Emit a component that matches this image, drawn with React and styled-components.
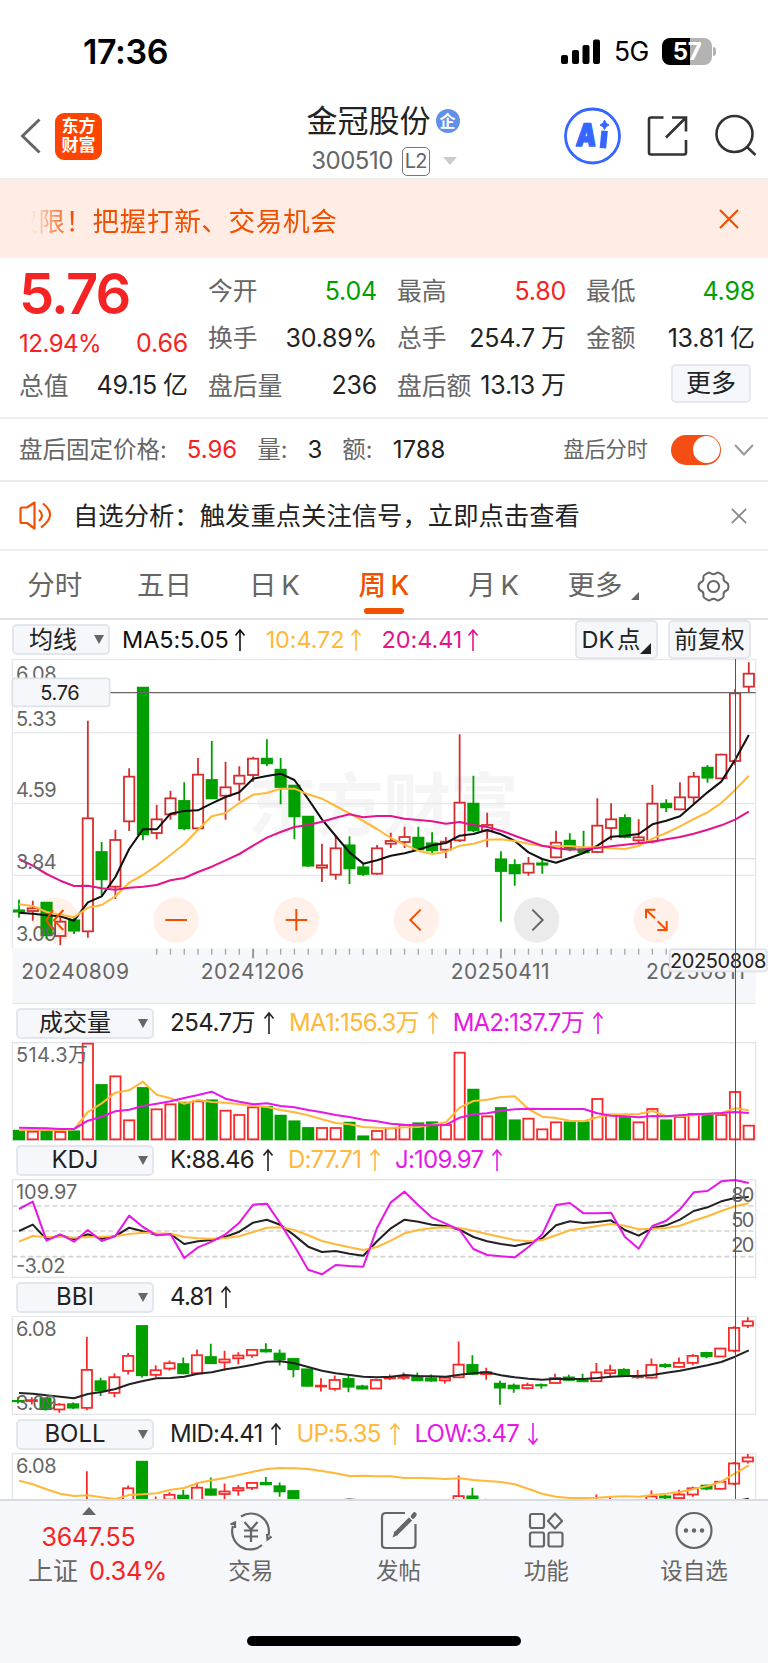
import React from 'react';
import styled, { createGlobalStyle } from 'styled-components';

const GlobalStyle = createGlobalStyle`
  * {
    box-sizing: border-box;
  }
  body {
    margin: 0;
    background: #fff;
    font-family: Inter, 'Noto Sans CJK SC', sans-serif;
    color: #222;
  }
  svg {
    display: block;
    flex: none;
  }
`;

const RED = '#f52323';
const GREEN = '#00a000';
const ORANGE = '#f05000';
const AMBER = '#ffb83a';
const PINK = '#e4148c';
const VIOLET = '#e619e6';
const BAR_RED = '#fa2a2a';
const CANDLE_RED = '#d32f2f';

const Page = styled.div`
  position: relative;
  width: 768px;
  height: 1663px;
  overflow: hidden;
  background: #fff;
`;

const Text = styled.span`
  font-size: ${({ $size }) => $size || 25}px;
  font-weight: ${({ $weight }) => $weight || 400};
  color: ${({ $color }) => $color || '#222'};
  letter-spacing: ${({ $track }) => $track || 0}px;
  line-height: 1;
  white-space: nowrap;
`;

const Unit = styled.span`
  margin-left: 6px;
  letter-spacing: 0;
`;

/* ---------- status bar ---------- */

const StatusBar = styled.div`
  display: flex;
  align-items: center;
  height: 92px;
  padding: 11px 52px 0 83px;
`;

const StatusRight = styled.div`
  display: flex;
  align-items: center;
  gap: 13px;
  margin-left: auto;
`;

const Battery = styled.div`
  display: flex;
  align-items: center;
  justify-content: center;
  width: 50px;
  height: 27px;
  border-radius: 8px;
  background: linear-gradient(90deg, #000 57%, #b3b3b3 57%);
`;

const BatteryGroup = styled.div`
  display: flex;
  align-items: center;
  gap: 1px;
`;

const BatteryTip = styled.div`
  width: 3px;
  height: 9px;
  border-radius: 0 3px 3px 0;
  background: #b3b3b3;
`;

/* ---------- header ---------- */

const Header = styled.header`
  display: grid;
  grid-template-columns: 230px 1fr 230px;
  height: 88px;
  padding-top: 2px;
  border-bottom: 2px solid #eceef0;
`;

const HeaderLeft = styled.div`
  display: flex;
  align-items: center;
  gap: 14px;
  padding-left: 20px;
`;

const Logo = styled.div`
  display: grid;
  place-content: center;
  width: 47px;
  height: 47px;
  border-radius: 9px;
  background: #ff4400;
  color: #fff;
  font-size: 17px;
  font-weight: 700;
  line-height: 19px;
  text-align: center;
`;

const HeaderCenter = styled.div`
  display: flex;
  flex-direction: column;
  align-items: center;
  padding-top: 11px;
`;

const TitleRow = styled.div`
  display: flex;
  align-items: center;
  height: 31px;
  gap: 5px;
`;

const Badge = styled.span`
  display: grid;
  place-content: center;
  width: 24px;
  height: 24px;
  margin-right: 2px;
  border-radius: 50%;
  background: #6290e8;
  color: #fff;
  font-size: 16px;
  font-weight: 700;
  line-height: 1;
`;

const CodeRow = styled.div`
  display: flex;
  align-items: center;
  height: 30px;
  margin-top: 10px;
`;

const LevelTag = styled.span`
  display: grid;
  place-content: center;
  width: 28px;
  height: 29px;
  margin: 0 13px 0 9px;
  border: 1.5px solid #777;
  border-radius: 5px;
  color: #666;
  font-size: 20px;
  line-height: 1;
  letter-spacing: -0.8px;
`;

const HeaderRight = styled.div`
  display: flex;
  align-items: center;
  justify-content: flex-end;
  padding-right: 11px;
`;

/* ---------- notice banner ---------- */

const Banner = styled.div`
  display: flex;
  align-items: center;
  justify-content: space-between;
  height: 78px;
  padding: 0 29px 0 11px;
  background: #ffede5;
`;

const Marquee = styled.div`
  display: flex;
  padding: 6px 0 2px;
  mask-image: linear-gradient(90deg, transparent 6%, #000 19%);
`;

/* ---------- quote ---------- */

const Quote = styled.section`
  display: grid;
  grid-template-columns: repeat(4, 169px);
  grid-template-rows: repeat(3, 47.2px);
  column-gap: 20px;
  height: 161px;
  padding: 10px 13px 0 19px;
  border-bottom: 2px solid #eef0f2;
`;

const PriceCell = styled.div`
  grid-row: span 2;
  display: flex;
  flex-direction: column;
`;

const PriceRow = styled.div`
  display: flex;
  flex: none;
  align-items: center;
  height: 51px;
`;

const Pair = styled.div`
  display: flex;
  align-items: center;
  justify-content: space-between;
`;

const ChangeRow = styled(Pair)`
  flex: none;
  height: 49px;
`;

const MoreButton = styled.button`
  justify-self: end;
  align-self: center;
  width: 80px;
  height: 39px;
  margin: -4px 4px 0 0;
  padding: 0;
  border: 2px solid #e5e8ee;
  border-radius: 5px;
  background: #f6f7fa;
  color: #222;
  font: 25px/1 Inter, 'Noto Sans CJK SC', sans-serif;
`;

/* ---------- rows under the quote ---------- */

const AfterHours = styled.div`
  display: flex;
  align-items: center;
  height: 63px;
  padding: 0 14px 0 19px;
  border-bottom: 2px solid #e9ebee;
`;

const Field = styled.span`
  display: flex;
  align-items: center;
  gap: 20px;
  margin-right: 20px;
`;

const Toggle = styled.div`
  display: flex;
  justify-content: flex-end;
  width: 50px;
  height: 30px;
  margin: 0 13px 0 23px;
  padding: 1.5px;
  border-radius: 15px;
  background: #f44e14;
  &::after {
    content: '';
    width: 27px;
    height: 27px;
    border-radius: 50%;
    background: #fff;
  }
`;

const Alert = styled.div`
  display: flex;
  align-items: center;
  gap: 20px;
  height: 69px;
  padding: 0 21px 0 19px;
  border-bottom: 2px solid #eef0f2;
`;

const Spacer = styled.div`
  flex: 1;
`;

/* ---------- tabs ---------- */

const Tabs = styled.nav`
  display: grid;
  grid-template-columns: repeat(7, 1fr);
  height: 69px;
  border-bottom: 2px solid #dfe1e8;
`;

const Tab = styled.div`
  display: flex;
  align-items: center;
  justify-content: center;
  gap: 9px;
  padding-top: 3px;
  color: ${({ $active }) => ($active ? ORANGE : '#666')};
  font-size: 27.5px;
  font-weight: ${({ $active }) => ($active ? 500 : 400)};
  line-height: 1;
  word-spacing: -3px;
  position: relative;
  ${({ $active }) =>
    $active &&
    `&::after {
      content: '';
      position: absolute;
      bottom: 4px;
      width: 40px;
      height: 6px;
      border-radius: 3px;
      background: ${ORANGE};
    }`}
`;

const Corner = styled.i`
  align-self: flex-end;
  width: 0;
  height: 0;
  margin-bottom: ${({ $lift }) => $lift || 0}px;
  border-left: ${({ $size }) => $size}px solid transparent;
  border-bottom: ${({ $size }) => $size}px solid ${({ $color }) => $color || '#666'};
`;

/* ---------- chart controls ---------- */

const Controls = styled.div`
  display: flex;
  align-items: center;
  height: 39px;
  padding: 0 17px 0 12px;
`;

const IndicatorBar = styled.div`
  display: flex;
  align-items: center;
  height: 38px;
  padding: 0 17px 0 16px;
`;

const Select = styled.div`
  display: flex;
  align-items: center;
  width: ${({ $width }) => $width}px;
  height: 31px;
  margin-right: ${({ $gap }) => $gap}px;
  padding-right: 4px;
  border: 2px solid #e3e6ec;
  border-radius: 5px;
  background: #f6f7fa;
  font-size: 24px;
  line-height: 1;
  span {
    flex: 1;
    padding-right: ${({ $inset }) => $inset || 0}px;
    text-align: center;
  }
`;

const Legend = styled.div`
  display: flex;
  align-items: center;
  gap: ${({ $gap }) => $gap ?? 9}px;
  margin-right: ${({ $after }) => $after ?? 15}px;
`;

const ChipButton = styled.div`
  display: flex;
  align-items: center;
  justify-content: center;
  width: 83px;
  height: 39px;
  margin-left: 10px;
  border: 2px solid #e3e6ec;
  border-radius: 5px;
  background: #f6f7fa;
  font-size: 23.5px;
  line-height: 1;
  white-space: nowrap;
  word-spacing: -4px;
`;

const Crosshair = styled.div`
  position: absolute;
  left: 735px;
  top: 659px;
  width: 1.4px;
  height: 840px;
  background: #555;
`;

/* ---------- bottom navigation ---------- */

const BottomNav = styled.footer`
  position: relative;
  display: grid;
  grid-template-columns: 177px repeat(4, 147.75px);
  height: 164px;
  border-top: 2px solid #d9dce2;
  background: #f6f7fa;
`;

const IndexCell = styled.div`
  display: flex;
  flex-direction: column;
  align-items: center;
  padding-top: 6px;
  svg {
    margin-bottom: 5px;
  }
`;

const IndexLine = styled.div`
  display: flex;
  align-items: center;
  gap: 11px;
  height: 34px;
  padding-left: ${({ $indent }) => $indent || 0}px;
`;

const NavItem = styled.div`
  display: flex;
  flex-direction: column;
  align-items: center;
  gap: 8px;
  padding-top: 9px;
`;

const HomeIndicator = styled.div`
  position: absolute;
  left: 247px;
  bottom: 17px;
  width: 274px;
  height: 10px;
  border-radius: 5px;
  background: #000;
`;

/* ---------- series, in thirds of a pixel from the top of each strip ---------- */

// direction, high, body top, body bottom, low
const candles = [
  ['g', 735, 766, 770, 787], ['r', 738, 760, 768, 796], ['g', 743, 743, 841, 850],
  ['r', 788, 800, 843, 870], ['g', 785, 796, 827, 836], ['r', 198, 490, 829, 847],
  ['g', 562, 591, 673, 720], ['r', 525, 555, 695, 731], ['r', 341, 365, 499, 527],
  ['g', 98, 98, 538, 555], ['r', 451, 493, 534, 552], ['r', 408, 430, 478, 493],
  ['g', 383, 438, 520, 525], ['r', 310, 359, 520, 523], ['g', 259, 375, 430, 430],
  ['r', 321, 397, 422, 493], ['r', 335, 362, 386, 436], ['r', 306, 311, 360, 379],
  ['g', 254, 311, 325, 332], ['g', 310, 344, 396, 447], ['g', 392, 392, 484, 552],
  ['g', 485, 485, 632, 635], ['r', 567, 631, 638, 680], ['r', 542, 580, 659, 673],
  ['g', 545, 571, 640, 686], ['g', 625, 637, 657, 662], ['r', 571, 580, 656, 658],
  ['r', 534, 558, 566, 578], ['r', 516, 546, 561, 578], ['g', 516, 548, 583, 583],
  ['g', 533, 565, 586, 593], ['r', 547, 560, 584, 609], ['r', 239, 443, 556, 560],
  ['g', 363, 446, 526, 530], ['r', 474, 510, 527, 576], ['g', 590, 613, 648, 799],
  ['g', 614, 630, 655, 691], ['r', 607, 626, 653, 661], ['g', 614, 625, 629, 655],
  ['r', 528, 563, 607, 609], ['g', 536, 557, 580, 588], ['g', 528, 583, 592, 592],
  ['r', 431, 512, 591, 593], ['r', 446, 493, 519, 555], ['g', 479, 489, 546, 549],
  ['r', 494, 547, 556, 567], ['r', 391, 446, 559, 564], ['g', 434, 446, 457, 470],
  ['r', 383, 427, 463, 465], ['r', 352, 365, 427, 446], ['g', 331, 338, 368, 382],
  ['r', 297, 299, 370, 372], ['r', 104, 115, 318, 330], ['r', 23, 56, 95, 112],
];

const ma5 = [773, 776, 781, 784, 797, 742, 724, 666, 582, 523, 523, 476, 468, 466, 445, 426, 412, 371, 363, 356, 375, 432, 493, 543, 592, 626, 616, 602, 595, 584, 571, 564, 542, 537, 525, 538, 558, 592, 612, 623, 609, 594, 572, 545, 542, 537, 508, 497, 484, 448, 412, 380, 315, 240];
const ma10 = [748, 753, 771, 779, 787, 758, 750, 724, 683, 660, 632, 600, 567, 524, 484, 474, 444, 419, 414, 401, 401, 418, 431, 453, 475, 498, 522, 549, 569, 587, 597, 590, 572, 566, 554, 553, 558, 566, 573, 573, 573, 577, 577, 580, 582, 573, 551, 534, 514, 492, 472, 444, 405, 362];
const ma20 = [612, 632, 657, 677, 693, 692, 700, 704, 698, 695, 690, 676, 669, 651, 635, 616, 597, 572, 548, 531, 516, 510, 500, 488, 478, 487, 483, 483, 491, 495, 499, 506, 501, 510, 516, 527, 542, 557, 572, 580, 584, 583, 579, 574, 569, 565, 560, 553, 546, 536, 524, 511, 494, 470];

const volumeTops = [391, 394, 394, 395, 393, 130, 254, 228, 360, 263, 327, 312, 307, 303, 300, 331, 344, 321, 320, 346, 363, 383, 383, 383, 367, 408, 392, 384, 374, 369, 366, 374, 157, 268, 348, 323, 360, 355, 387, 366, 366, 366, 296, 343, 353, 366, 326, 360, 350, 341, 341, 344, 275, 376];
const volMa1 = [390, 390, 390, 390, 388, 336, 310, 278, 271, 245, 284, 295, 311, 300, 306, 308, 313, 318, 321, 330, 337, 346, 358, 369, 373, 381, 383, 384, 382, 381, 374, 367, 323, 303, 299, 291, 289, 327, 350, 354, 362, 364, 352, 344, 343, 342, 333, 348, 349, 346, 342, 340, 325, 331];
const volMa2 = [383, 384, 385, 387, 387, 362, 350, 334, 329, 318, 311, 304, 294, 285, 275, 296, 305, 313, 310, 318, 322, 330, 337, 345, 351, 359, 364, 371, 374, 376, 376, 375, 353, 343, 340, 332, 328, 326, 327, 327, 327, 327, 340, 347, 349, 352, 348, 349, 346, 343, 341, 339, 336, 339];

const kdjK = [693, 674, 718, 706, 718, 703, 716, 708, 683, 694, 704, 702, 732, 724, 720, 710, 695, 668, 659, 675, 706, 740, 756, 753, 761, 767, 724, 685, 659, 665, 674, 678, 689, 711, 724, 732, 738, 729, 715, 676, 664, 669, 666, 661, 690, 707, 684, 676, 659, 633, 622, 604, 594, 591];
const kdjD = [725, 708, 711, 710, 713, 711, 710, 709, 702, 698, 700, 701, 711, 715, 716, 714, 709, 696, 683, 682, 690, 706, 723, 733, 742, 750, 741, 722, 700, 690, 684, 682, 684, 692, 702, 711, 720, 724, 720, 706, 691, 685, 678, 672, 677, 688, 686, 684, 677, 662, 649, 633, 619, 610];
const kdjJ = [627, 605, 722, 703, 725, 690, 723, 708, 647, 681, 706, 702, 774, 742, 725, 703, 668, 614, 611, 672, 738, 809, 823, 795, 798, 800, 684, 607, 575, 616, 653, 671, 690, 747, 765, 769, 772, 741, 703, 615, 609, 640, 640, 638, 710, 746, 678, 662, 628, 577, 573, 544, 540, 549];

const bbi = [339, 341, 346, 350, 355, 342, 336, 327, 313, 303, 295, 294, 290, 281, 277, 268, 262, 254, 245, 244, 250, 261, 272, 280, 285, 290, 292, 290, 285, 288, 289, 290, 284, 280, 277, 286, 292, 296, 299, 296, 297, 297, 294, 290, 288, 288, 285, 278, 272, 264, 256, 246, 230, 211];
const bollUp = [602, 613, 628, 641, 648, 646, 652, 657, 645, 643, 640, 629, 624, 609, 601, 593, 584, 575, 567, 564, 565, 567, 573, 580, 588, 587, 589, 589, 594, 594, 595, 597, 595, 600, 603, 606, 613, 627, 641, 650, 654, 654, 653, 650, 649, 650, 645, 641, 636, 627, 618, 605, 580, 556];

const LEFT = 37;
const RIGHT = 2267;
const xAt = (i) => 57 + i * 41.31;
const bbiScale = (y) => 138 + (y - 98) * 0.336;
const bollScale = (y) => 523 + (y - 24) * 0.299;

/* ---------- chart parts ---------- */

const Line = ({ data, color }) => (
  <polyline
    points={data.map((y, i) => `${xAt(i).toFixed(1)},${y}`).join(' ')}
    fill="none"
    stroke={color}
    strokeWidth="6.2"
    strokeLinejoin="round"
  />
);

const Candles = ({ scale = (y) => y, red = CANDLE_RED, shift = 0 }) =>
  candles.map(([dir, ...levels], i) => {
    const [high, top, bottom, low] = levels.map(scale);
    const x = xAt(i) + shift;
    const color = dir === 'g' ? GREEN : red;
    const height = Math.max(bottom - top, 1);
    return (
      <g key={i} stroke={color} strokeWidth="5.4">
        <path d={`M${x} ${high - 1}V${top}M${x} ${bottom}V${low + 1}`} />
        <rect x={x - 15.5} y={top} width="31" height={height} fill={dir === 'g' ? GREEN : 'none'} />
      </g>
    );
  });

const Frame = ({ top, bottom }) => (
  <rect x={LEFT} y={top} width={RIGHT - LEFT} height={bottom - top} fill="none" stroke="#e3e5ea" strokeWidth="4" />
);

const Label = ({ x, y, width, color = '#666', size = 60, children }) => (
  <text x={x - 2} y={y} textLength={width} fill={color} fontSize={size}>
    {children}
  </text>
);

const Strip = ({ top, height, children }) => (
  <svg width="768" height={height} viewBox={`0 ${top} 2304 ${height * 3}`}>
    {children}
  </svg>
);

const tools = [
  { x: 166, d: 'M159 765L139 796L159 825M190 765L162 796L190 825' },
  { x: 528, d: 'M496 795H561' },
  { x: 889, d: 'M857 795H922M889 762V827' },
  { x: 1249, d: 'M1262 764L1231 795L1262 826' },
  { x: 1610, d: 'M1597 764L1628 795L1597 826', muted: true },
  { x: 1969, d: 'M1938 790V764H1966M1938 764L1965 790M2000 798V825H1972M2000 825L1973 799' },
];

const MainChart = () => (
  <Strip top={12} height={345}>
    <rect x={LEFT} y="880" width={RIGHT - LEFT} height="166" fill="#f6f7fa" />
    <path d="M37 1046H2267" stroke="#e3e5ea" strokeWidth="4" />
    <text x="745" y="526" textLength="810" fill="#f5f5f6" fontSize="204" fontWeight="700">东方财富</text>
    <path d="M37 880V14H2267V880M37 233H2267M37 446H2267M37 661H2267" fill="none" stroke="#e6e8f0" strokeWidth="4" />
    <path d="M1685 611H2267" stroke="#dcdcdc" strokeWidth="3.5" />
    {tools.map(({ x, muted }) => (
      <circle key={x} cx={x} cy="795" r="68" fill={muted ? '#ebebeb' : '#fff0e9'} />
    ))}
    <Label x={50} y={78} width={122}>6.08</Label>
    <Candles />
    <Line data={ma5} color="#111" />
    <Line data={ma10} color={AMBER} />
    <Line data={ma20} color={PINK} />
    <Label x={50} y={212} width={122}>5.33</Label>
    <Label x={50} y={427} width={122}>4.59</Label>
    <Label x={50} y={643} width={122}>3.84</Label>
    <Label x={50} y={859} width={122}>3.09</Label>
    <path d="M330 113H2267" stroke="#666" strokeWidth="4" />
    <rect x="37" y="70" width="292" height="84" rx="8" fill="#f6f7fa" stroke="#dfe2e9" strokeWidth="5" />
    <Label x={123} y={134} width={118} color="#222">5.76</Label>
    {tools.map(({ x, d, muted }) => (
      <path key={x} d={d} fill="none" stroke={muted ? '#666' : ORANGE} strokeWidth="6" />
    ))}
    {Array.from({ length: 38 }, (_, k) => k + 10).map((i) => (
      <path
        key={i}
        d={`M${xAt(i)} 881V${i % 18 === 17 ? 910 : 899}`}
        stroke={i % 18 === 17 ? '#999' : '#a6a6a6'}
        strokeWidth={i % 18 === 17 ? 6 : 4}
      />
    ))}
    <Label x={66} y={972} width={323} size={63}>20240809</Label>
    <Label x={604} y={972} width={310} size={63}>20241206</Label>
    <Label x={1354} y={972} width={297} size={63}>20250411</Label>
    <Label x={1940} y={972} width={297} size={63}>20250811</Label>
    <rect x="2009" y="883" width="292" height="66" rx="8" fill="#f6f7fa" stroke="#dfe2e9" strokeWidth="5" />
    <Label x={2012} y={938} width={289} size={60} color="#222">20250808</Label>
  </Strip>
);

const VolumeChart = () => (
  <Strip top={126} height={99}>
    <Frame top={128} bottom={421} />
    {volumeTops.map((top, i) => {
      const up = candles[i][0] === 'r' || i === 38;
      return (
        <rect
          key={i}
          x={xAt(i) - 15.5}
          y={top + 1}
          width="31"
          height={417 - top}
          fill={up ? 'none' : GREEN}
          stroke={up ? BAR_RED : GREEN}
          strokeWidth="5.4"
        />
      );
    })}
    <Line data={volMa1} color={AMBER} />
    <Line data={volMa2} color={VIOLET} />
    <Label x={50} y={186} width={216}>514.3万</Label>
  </Strip>
);

const KdjChart = () => (
  <Strip top={537} height={99}>
    <Frame top={539} bottom={832} />
    <path d="M37 618H2267M37 693H2267M37 770H2267" stroke="#d2d2d2" strokeWidth="5" strokeDasharray="15 9" />
    <Line data={kdjK} color="#222" />
    <Line data={kdjD} color={AMBER} />
    <Line data={kdjJ} color={VIOLET} />
    <Label x={50} y={597} width={184}>109.97</Label>
    <Label x={50} y={819} width={148}>-3.02</Label>
    <Label x={2196} y={605} width={69}>80</Label>
    <Label x={2196} y={682} width={69}>50</Label>
    <Label x={2196} y={756} width={69}>20</Label>
  </Strip>
);

const BbiChart = () => (
  <Strip top={108} height={99}>
    <Frame top={109} bottom={403} />
    <Candles scale={bbiScale} red={BAR_RED} shift={-3} />
    <Line data={bbi} color="#222" />
    <Label x={50} y={167} width={122}>6.08</Label>
    <Label x={50} y={389} width={122}>3.09</Label>
  </Strip>
);

const BollChart = () => (
  <Strip top={519} height={46}>
    <Frame top={521} bottom={815} />
    <Candles scale={bollScale} red={BAR_RED} shift={-3} />
    <Line data={ma20.map((y) => bollScale(y))} color="#222" />
    <Line data={bollUp} color={AMBER} />
    <Label x={50} y={578} width={122}>6.08</Label>
  </Strip>
);

const Arrow = ({ color, down }) => (
  <svg width="10" height="24" viewBox="0 0 10 24" fill="none" stroke={color} strokeWidth="1.6">
    <path d={down ? 'M5 1V22M0.5 16.5L5 22L9.5 16.5' : 'M5 23V2M0.5 7.5L5 2L9.5 7.5'} />
  </svg>
);

const Reading = ({ color = '#222', size = 24, track = -0.8, down, gap, after, children }) => (
  <Legend $gap={gap} $after={after}>
    <Text $size={size} $color={color} $track={track}>{children}</Text>
    <Arrow color={color} down={down} />
  </Legend>
);

const Caret = () => (
  <svg width="10" height="9" viewBox="0 0 10 9">
    <path d="M0 0H10L5 9Z" fill="#666" />
  </svg>
);

const IndicatorSelect = ({ children }) => (
  <Select $width={138} $gap={16} $inset={6}>
    <span>{children}</span>
    <Caret />
  </Select>
);

/* ---------- icons ---------- */

const SignalIcon = () => (
  <svg width="40" height="26" viewBox="0 0 40 26">
    <rect x="0" y="16" width="7" height="9" rx="2" />
    <rect x="11" y="11" width="7" height="14" rx="2" />
    <rect x="21.5" y="6" width="7" height="19" rx="2" />
    <rect x="32" y="0.5" width="7" height="24.5" rx="2" />
  </svg>
);

const BackIcon = () => (
  <svg width="21" height="36" viewBox="0 0 21 36" fill="none" stroke="#666" strokeWidth="3">
    <path d="M19.5 1.5L2.5 18L19.5 34.5" />
  </svg>
);

const HeaderIcons = () => (
  <svg width="194" height="60" viewBox="563 106 194 60" fill="none" stroke="#333" strokeWidth="2.6">
    <circle cx="592.5" cy="136" r="27" stroke="#3566ff" strokeWidth="2.8" />
    <g transform="translate(575.5 146) skewX(-5)">
      <text
        textLength="20"
        lengthAdjust="spacingAndGlyphs"
        fontSize="31"
        fontWeight="900"
        fill="#3566ff"
        stroke="#3566ff"
        strokeWidth="1.5"
        strokeLinejoin="round"
      >
        A
      </text>
    </g>
    <path d="M604.3 134L603.2 145" stroke="#3566ff" strokeWidth="6.5" strokeLinecap="square" strokeLinejoin="round" />
    <path d="M604.5 120Q605.5 124 609 125Q605.5 126 604.500 129.500Q603.500 126 600 125Q603.500 124 604.500 120Z" fill="#3566ff" stroke="#3566ff" strokeWidth="1" />
    <path d="M663.5 117.5H651Q649 117.5 649 119.5V152.5Q649 154.5 651 154.5H684Q686 154.5 686 152.5V140M672 117.5H686V131.500M685.5 118L666 137.5" />
    <circle cx="734.5" cy="134" r="18" />
    <path d="M747 147L755.5 155" />
  </svg>
);

const CloseIcon = ({ size, color }) => (
  <svg width={size} height={size} viewBox="0 0 20 20" stroke={color} strokeWidth="2.2">
    <path d="M1 1L19 19M19 1L1 19" />
  </svg>
);

const HornIcon = () => (
  <svg width="34" height="29" viewBox="0 0 34 29" fill="none" stroke={ORANGE} strokeWidth="2.2" strokeLinejoin="round">
    <path d="M15.5 1.5L8 6.5H3Q1.5 6.5 1.5 8V20.5Q1.5 22 3 22H8L15.5 27.5Z" />
    <path d="M20 9Q26 14.5 20 20M24 2.5Q39 14 22 26.5" />
  </svg>
);

const GearIcon = () => (
  <svg width="33" height="31" viewBox="0 0 33 31" fill="none" stroke="#666" strokeWidth="2">
    <path d="M10.5 2.2Q12 0.8 13.8 2.2Q16.5 4.2 19.2 2.2Q21 0.8 22.5 2.2L25.5 4Q27 5 26.5 7.5Q26.5 10.5 29.5 11.5Q31.5 12.5 31.5 15.5Q31.5 18.5 29.5 19.5Q26.5 20.5 26.5 23.5Q27 26 25.5 27L22.5 28.8Q21 30.2 19.2 28.8Q16.5 26.8 13.8 28.8Q12 30.2 10.5 28.8L7.5 27Q6 26 6.5 23.5Q6.5 20.5 3.5 19.5Q1.5 18.5 1.5 15.5Q1.5 12.5 3.5 11.5Q6.5 10.5 6.5 7.5Q6 5 7.5 4Z" />
    <circle cx="16.5" cy="15.5" r="5.6" />
  </svg>
);

const navIconProps = {
  width: 44,
  height: 42,
  viewBox: '0 0 44 42',
  fill: 'none',
  stroke: '#666',
  strokeWidth: 2.2,
};

const navItems = [
  {
    label: '交易',
    icon: (
      <svg {...navIconProps}>
        <path d="M12 6.5A18 18 0 0 1 39.5 25.5M4 16A18 18 0 0 0 33 35M1.5 14.5L6 12.5V18M42.5 26.5L38.5 29.5L38 24" />
        <path d="M15.5 12L22 19.5L28.5 12M15 20.5H29M15 26.5H29M22 20V32" />
      </svg>
    ),
  },
  {
    label: '发帖',
    icon: (
      <svg {...navIconProps}>
        <path d="M28 3H9Q5 3 5 7V34.5Q5 38 9 38H34.5Q38.5 38 38.5 34.5V14" />
        <path d="M33.5 9L18.5 24" strokeWidth="4.5" />
        <path d="M36 6.5L37.5 4.500" strokeWidth="4.5" strokeLinecap="round" />
        <path d="M17.500 21.500L15.5 27.5L21 25Z" fill="#666" stroke="none" />
      </svg>
    ),
  },
  {
    label: '功能',
    icon: (
      <svg {...navIconProps}>
        <rect x="6" y="4" width="14" height="14" rx="2" />
        <rect x="6" y="22.5" width="14" height="14" rx="2" />
        <rect x="24.5" y="22.5" width="14" height="14" rx="2" />
        <path d="M31 3.5L38 11L31 18.5L24 11Z" strokeLinejoin="round" />
      </svg>
    ),
  },
  {
    label: '设自选',
    icon: (
      <svg {...navIconProps}>
        <circle cx="22" cy="20.5" r="17.5" />
        <g fill="#666" stroke="none">
          <circle cx="14" cy="20.5" r="2.2" />
          <circle cx="22" cy="20.5" r="2.2" />
          <circle cx="30" cy="20.5" r="2.2" />
        </g>
      </svg>
    ),
  },
];

const quoteItems = [
  { label: '今开', value: '5.04', color: GREEN },
  { label: '最高', value: '5.80', color: RED },
  { label: '最低', value: '4.98', color: GREEN },
  { label: '换手', value: '30.89%' },
  { label: '总手', value: '254.7', unit: '万' },
  { label: '金额', value: '13.81', unit: '亿' },
  { label: '总值', value: '49.15', unit: '亿' },
  { label: '盘后量', value: '236' },
  { label: '盘后额', value: '13.13', unit: '万' },
];

const tabs = ['分时', '五日', '日 K', '周 K', '月 K'];

export default function App() {
  return (
    <Page>
      <GlobalStyle />
      <StatusBar>
        <Text $size={34} $weight={600} $color="#000" $track={-0.4}>17:36</Text>
        <StatusRight>
          <SignalIcon />
          <Text $size={26.5} $color="#000" $track={-0.4}>5G</Text>
          <BatteryGroup>
            <Battery>
              <Text $size={24} $weight={700} $color="#fff" $track={-0.5}>57</Text>
            </Battery>
            <BatteryTip />
          </BatteryGroup>
        </StatusRight>
      </StatusBar>

      <Header>
        <HeaderLeft>
          <BackIcon />
          <Logo>东方<br />财富</Logo>
        </HeaderLeft>
        <HeaderCenter>
          <TitleRow>
            <Text $size={31}>金冠股份</Text>
            <Badge>企</Badge>
          </TitleRow>
          <CodeRow>
            <Text $size={24} $color="#666" $track={-0.5}>300510</Text>
            <LevelTag>L2</LevelTag>
            <svg width="14" height="8" viewBox="0 0 14 8"><path d="M0 0H14L7 8Z" fill="#ccc" /></svg>
          </CodeRow>
        </HeaderCenter>
        <HeaderRight>
          <HeaderIcons />
        </HeaderRight>
      </Header>

      <Banner>
        <Marquee>
          <Text $size={26.6} $color={ORANGE} $track={0.6}>权限！把握打新、交易机会</Text>
        </Marquee>
        <CloseIcon size={20} color={ORANGE} />
      </Banner>

      <Quote>
        <PriceCell>
          <PriceRow>
            <Text $size={56} $weight={600} $color={RED} $track={-1.8}>5.76</Text>
          </PriceRow>
          <ChangeRow>
            <Text $size={24} $color={RED} $track={-0.5}>12.94%</Text>
            <Text $size={25} $color={RED} $track={-0.2}>0.66</Text>
          </ChangeRow>
        </PriceCell>
        {quoteItems.map(({ label, value, unit, color }) => (
          <Pair key={label}>
            <Text $size={24.8} $color="#666">{label}</Text>
            <Text $size={25} $color={color} $track={-0.2}>
              {value}
              {unit && <Unit>{unit}</Unit>}
            </Text>
          </Pair>
        ))}
        <MoreButton>更多</MoreButton>
      </Quote>

      <AfterHours>
        <Field>
          <Text $size={23.5} $color="#666">盘后固定价格:</Text>
          <Text $size={24} $color={RED}>5.96</Text>
        </Field>
        <Field>
          <Text $size={23.5} $color="#666">量:</Text>
          <Text $size={24}>3</Text>
        </Field>
        <Field>
          <Text $size={23.5} $color="#666">额:</Text>
          <Text $size={24}>1788</Text>
        </Field>
        <Spacer />
        <Text $size={21.2} $color="#666">盘后分时</Text>
        <Toggle />
        <svg width="20" height="12" viewBox="0 0 20 12" fill="none" stroke="#999" strokeWidth="2">
          <path d="M1 1L10 10.5L19 1" />
        </svg>
      </AfterHours>

      <Alert>
        <HornIcon />
        <Text $size={25.35}>自选分析：触发重点关注信号，立即点击查看</Text>
        <Spacer />
        <CloseIcon size={16} color="#888" />
      </Alert>

      <Tabs>
        {tabs.map((name) => (
          <Tab key={name} $active={name === '周 K'}>{name}</Tab>
        ))}
        <Tab>
          更多
          <Corner $size={8} $lift={18} />
        </Tab>
        <Tab><GearIcon /></Tab>
      </Tabs>

      <Controls>
        <Select $width={98} $gap={12} $inset={2}>
          <span>均线</span>
          <Caret />
        </Select>
        <Reading color="#111" size={23.5} track={-0.1} gap={6} after={21}>MA5:5.05</Reading>
        <Reading color={AMBER} size={23.5} track={-0.1} gap={6} after={21}>10:4.72</Reading>
        <Reading color={PINK} size={23.5} track={-0.1} gap={6}>20:4.41</Reading>
        <Spacer />
        <ChipButton>
          DK 点
          <Corner $size={11} $lift={3} $color="#222" />
        </ChipButton>
        <ChipButton>前复权</ChipButton>
      </Controls>
      <MainChart />

      <IndicatorBar>
        <IndicatorSelect>成交量</IndicatorSelect>
        <Reading track={-0.5}>254.7万</Reading>
        <Reading color={AMBER}>MA1:156.3万</Reading>
        <Reading color={VIOLET}>MA2:137.7万</Reading>
      </IndicatorBar>
      <VolumeChart />

      <IndicatorBar>
        <IndicatorSelect>KDJ</IndicatorSelect>
        <Reading>K:88.46</Reading>
        <Reading color={AMBER}>D:77.71</Reading>
        <Reading color={VIOLET}>J:109.97</Reading>
      </IndicatorBar>
      <KdjChart />

      <IndicatorBar>
        <IndicatorSelect>BBI</IndicatorSelect>
        <Reading>4.81</Reading>
      </IndicatorBar>
      <BbiChart />

      <IndicatorBar>
        <IndicatorSelect>BOLL</IndicatorSelect>
        <Reading>MID:4.41</Reading>
        <Reading color={AMBER}>UP:5.35</Reading>
        <Reading color={VIOLET} down>LOW:3.47</Reading>
      </IndicatorBar>
      <BollChart />
      <Crosshair />

      <BottomNav>
        <IndexCell>
          <svg width="14" height="8" viewBox="0 0 14 8"><path d="M0 8H14L7 0Z" fill="#666" /></svg>
          <IndexLine>
            <Text $size={25} $color={RED} $track={-0.2}>3647.55</Text>
          </IndexLine>
          <IndexLine $indent={18}>
            <Text $size={25} $color="#666">上证</Text>
            <Text $size={25.5} $color={RED} $track={-0.3}>0.34%</Text>
          </IndexLine>
        </IndexCell>
        {navItems.map(({ label, icon }) => (
          <NavItem key={label}>
            {icon}
            <Text $size={22.5} $color="#666">{label}</Text>
          </NavItem>
        ))}
        <HomeIndicator />
      </BottomNav>
    </Page>
  );
}
